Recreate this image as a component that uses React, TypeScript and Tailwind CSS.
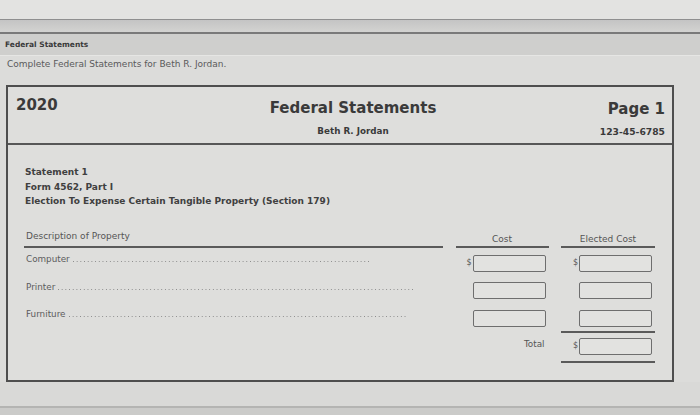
import React from "react";

const font = { fontFamily: '"DejaVu Sans", Verdana, sans-serif' };

function Money({ dollar }: { dollar?: boolean }) {
  return (
    <div className="flex items-center justify-end pr-[3px] h-[17px]">
      <span className="text-[8px] text-[#555] w-[6px] leading-none">{dollar ? "$" : ""}</span>
      <div className="w-[73px] h-[17px] rounded-[2px] border-[1.5px] border-[#6e6e6e] bg-[#e2e2e0]" />
    </div>
  );
}

function Row({ label, leaderEnd, dollar }: { label: string; leaderEnd: number; dollar?: boolean }) {
  return (
    <div className="grid grid-cols-[419px_93px_94px] gap-x-[12.5px] h-[17px] items-center">
      <div className="flex items-center text-[8.8px] text-[#5c5c5c] leading-none pl-[2px]">
        <span className="mr-[3px] -mt-[7px]">{label}</span>
        <div
          className="h-[1px] bg-[linear-gradient(to_right,#8a8a8a_1px,transparent_1px)] bg-[length:3.7px_1px] bg-repeat-x -mt-[2px]"
          style={{ width: leaderEnd }}
        />
      </div>
      <Money dollar={dollar} />
      <Money dollar={dollar} />
    </div>
  );
}

export default function App() {
  return (
    <div className="w-[700px] h-[415px] bg-[#dcdcda] flex flex-col overflow-hidden" style={font}>
      <div className="h-[19px] bg-[#e3e3e1] shrink-0" />
      <div className="h-[15px] shrink-0 border-t border-b-2 border-t-[#8f8f8f] border-b-[#7a7a7a] bg-[linear-gradient(to_bottom,#c4c4c4,#d3d3d1)]" />
      <div className="h-[22px] shrink-0 bg-[#cfcfcd] flex items-center pl-[5px] text-[7.5px] font-bold text-[#3a3a3a] border-b border-[#e6e6e4]">
        Federal Statements
      </div>
      <div className="h-[29px] shrink-0 flex items-center pl-[7px] pb-[11px] text-[9px] text-[#5a5a5a]">
        Complete Federal Statements for Beth R. Jordan.
      </div>

      <div className="ml-[6px] w-[668px] h-[297px] shrink-0 border-2 border-[#4e4e4e] bg-[#dededc] flex flex-col">
        <div className="h-[58px] shrink-0 border-b-2 border-[#575757] grid grid-cols-[272px_146px_1fr] pt-[9px]">
          <div className="pl-[8px] text-[15px] font-bold text-[#3a3a3a] leading-[18px]">2020</div>
          <div className="flex flex-col items-center text-[#3a3a3a]">
            <div className="text-[15px] font-bold leading-[18px] mt-[3px] whitespace-nowrap">Federal Statements</div>
            <div className="text-[8.75px] font-bold leading-[12px] mt-[8px] whitespace-nowrap">Beth R. Jordan</div>
          </div>
          <div className="flex flex-col items-end pr-[7px] text-[#3a3a3a]">
            <div className="text-[15px] font-bold leading-[18px] mt-[4px]">Page 1</div>
            <div className="text-[9.2px] font-bold leading-[12px] mt-[8px]">123-45-6785</div>
          </div>
        </div>

        <div className="pl-[17px] pt-[20px] text-[9px] font-bold text-[#404040] leading-[14.5px]">
          <div>Statement 1</div>
          <div>Form 4562, Part I</div>
          <div>Election To Expense Certain Tangible Property (Section 179)</div>
        </div>

        <div className="pl-[16px] pt-[22px] flex flex-col">
          <div className="grid grid-cols-[419px_93px_94px] gap-x-[12.5px] text-[9px] text-[#555] leading-[10px]">
            <div className="border-b-2 border-[#5a5a5a] pb-[4px] pl-[2px]">Description of Property</div>
            <div className="border-b-2 border-[#5a5a5a] pb-[2px] text-center mt-[3px]">Cost</div>
            <div className="border-b-2 border-[#5a5a5a] pb-[2px] text-center mt-[3px]">Elected Cost</div>
          </div>
          <div className="flex flex-col gap-y-[10.5px] mt-[7px]">
            <Row label="Computer" leaderEnd={296} dollar />
            <Row label="Printer" leaderEnd={356} />
            <Row label="Furniture" leaderEnd={338} />
          </div>
          <div className="grid grid-cols-[419px_93px_94px] gap-x-[12.5px] mt-[4px]">
            <div />
            <div />
            <div className="border-t-2 border-[#5a5a5a]" />
          </div>
          <div className="grid grid-cols-[419px_93px_94px] gap-x-[12.5px] mt-[5px] h-[17px] items-center">
            <div />
            <div className="text-right pr-[4px] text-[8.8px] text-[#555] leading-none -mt-[3px]">Total</div>
            <Money dollar />
          </div>
          <div className="grid grid-cols-[419px_93px_94px] gap-x-[12.5px] mt-[6px]">
            <div />
            <div />
            <div className="border-t-2 border-[#5a5a5a]" />
          </div>
        </div>
      </div>

      <div className="h-[24px] shrink-0 bg-[#d9d9d7]" />
      <div className="flex-1 border-t-2 border-[#b4b4b2] bg-[#cbcbc9]" />
    </div>
  );
}
